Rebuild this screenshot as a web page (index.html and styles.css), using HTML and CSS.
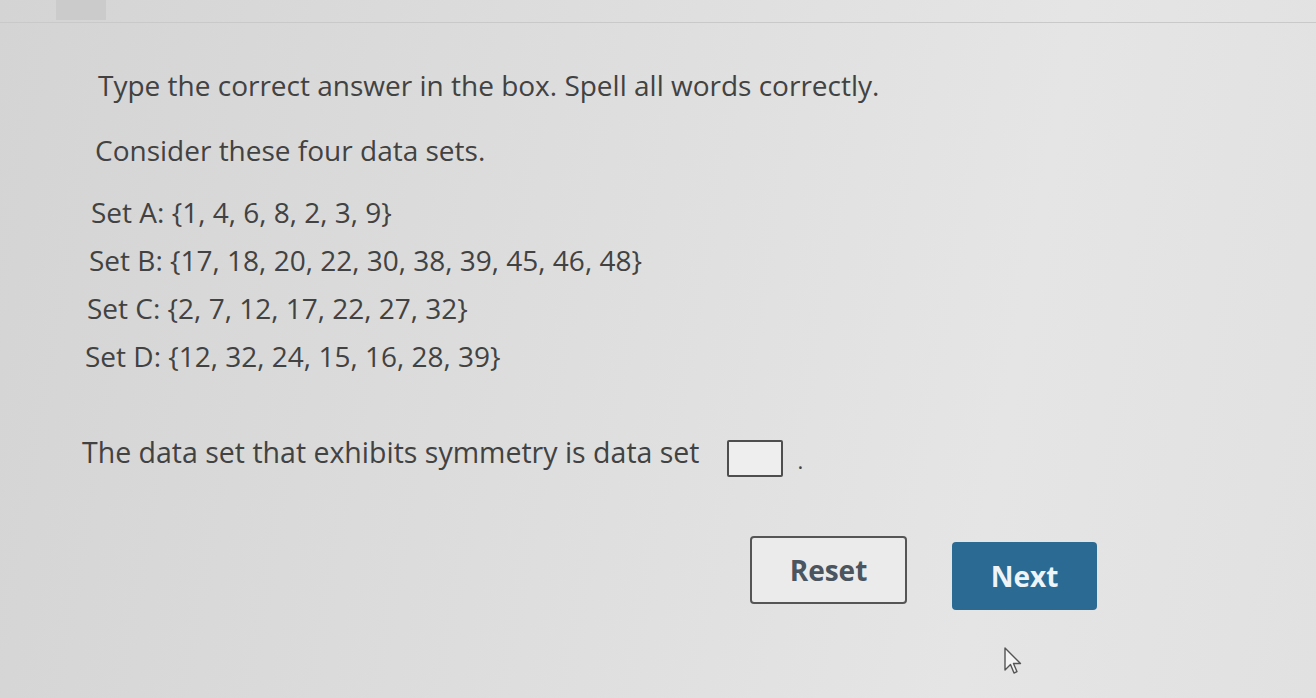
FILE: index.html
```html
<!DOCTYPE html>
<html lang="en">
<head>
  <meta charset="UTF-8">
  <meta name="viewport" content="width=device-width, initial-scale=1.0">
  <title>Question</title>
  <link rel="stylesheet" href="styles.css">
</head>
<body>
  <div class="top-bar">
    <div class="top-tab"></div>
  </div>

  <div class="question">
    <p class="instructions">Type the correct answer in the box. Spell all words correctly.</p>

    <p class="prompt">Consider these four data sets.</p>

    <ul class="set-list">
      <li class="set-a">Set A: {1, 4, 6, 8, 2, 3, 9}</li>
      <li class="set-b">Set B: {17, 18, 20, 22, 30, 38, 39, 45, 46, 48}</li>
      <li class="set-c">Set C: {2, 7, 12, 17, 22, 27, 32}</li>
      <li class="set-d">Set D: {12, 32, 24, 15, 16, 28, 39}</li>
    </ul>

    <p class="answer-line">
      The data set that exhibits symmetry is data set
      <input type="text" class="answer-box" aria-label="answer">
      <span class="period">.</span>
    </p>

    <div class="action-buttons">
      <button class="btn btn-reset">Reset</button>
      <button class="btn btn-next">Next</button>
      <svg class="pointer" width="20" height="30" viewBox="0 0 20 30">
        <path d="M2 2 L2 24 L7.5 18.5 L11 27 L14 25.7 L10.5 17.5 L17.5 17.5 Z" fill="#f4f4f4" stroke="#555" stroke-width="1.4" stroke-linejoin="round"/>
      </svg>
    </div>
  </div>
</body>
</html>
```

FILE: styles.css
```css
:root {
  --text-color: #424242;
  --button-blue: #2b6a92;
  --border-dark: #555;
}

body {
  font-family: "Open Sans", Arial, sans-serif;
  margin: 0;
  padding: 0;
  color: var(--text-color);
  background: linear-gradient(100deg, #d4d4d4 0%, #dddddd 40%, #e5e5e5 75%, #e1e1e1 100%);
  height: 698px;
  overflow: hidden;
}

.top-bar {
  height: 22px;
  border-bottom: 1px solid #c9c9c9;
  padding-left: 56px;
}

.top-tab {
  width: 50px;
  height: 20px;
  background-color: #cbcbcb;
}

.question {
  padding-left: 84px;
  font-size: 28px;
  line-height: 34px;
}

.instructions {
  margin: 45px 0 0 14px;
}

.prompt {
  margin: 31px 0 0 11px;
}

.set-list {
  list-style-type: none;
  padding: 0;
  margin: 28px 0 0 0;
}

.set-list li {
  margin-bottom: 14px;
}

.set-a { margin-left: 7px; }
.set-b { margin-left: 5px; }
.set-c { margin-left: 3px; }
.set-d { margin-left: 1px; }

.answer-line {
  display: flex;
  align-items: flex-start;
  margin: 62px 0 0 -2px;
  font-size: 28.5px;
}

.answer-box {
  width: 56px;
  height: 37px;
  box-sizing: border-box;
  margin: 5px 0 0 27px;
  border: 2px solid #4e4e4e;
  border-radius: 2px;
  background-color: #eeeeee;
}

.period {
  margin: 8px 0 0 15px;
  font-size: 22px;
}

.action-buttons {
  display: flex;
  align-items: flex-start;
  margin: 59px 0 0 666px;
  gap: 45px;
  position: relative;
}

.btn {
  font-family: "Open Sans", Arial, sans-serif;
  font-size: 28px;
  font-weight: bold;
  border-radius: 4px;
  cursor: pointer;
  padding: 0;
}

.btn-reset {
  width: 157px;
  height: 68px;
  background-color: #ebebeb;
  color: #4a5560;
  border: 2px solid var(--border-dark);
}

.btn-next {
  width: 145px;
  height: 68px;
  margin-top: 6px;
  background-color: var(--button-blue);
  color: #eef4f8;
  border: none;
}

.pointer {
  position: absolute;
  left: 253px;
  top: 110px;
}
```
